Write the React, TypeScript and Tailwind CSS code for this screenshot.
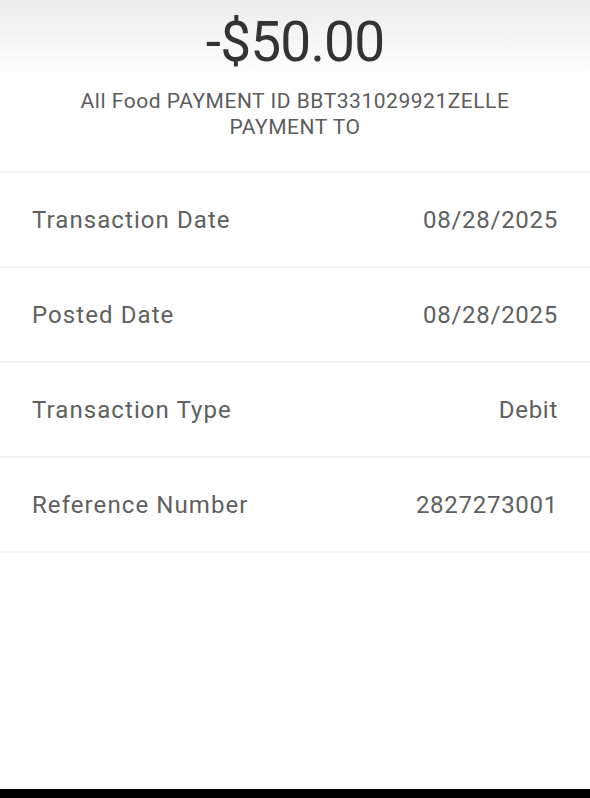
import React from 'react';

interface DetailRow {
    label: string;
    value: string;
}

const rows: DetailRow[] = [
    { label: 'Transaction Date', value: '08/28/2025' },
    { label: 'Posted Date', value: '08/28/2025' },
    { label: 'Transaction Type', value: 'Debit' },
    { label: 'Reference Number', value: '2827273001' },
];

const App: React.FC = () => {
    return (
        <div className="flex flex-col h-[798px] w-[590px] bg-white font-['Roboto',sans-serif] overflow-hidden">
            <div className="flex flex-col items-center h-[171px] bg-gradient-to-b from-[#ececec] via-white via-[45%] to-white">
                <h1 className="mt-[9px] text-[55px] leading-[66px] text-[#333333] tracking-[-0.015em]">-$50.00</h1>
                <p className="mt-[13px] max-w-[450px] text-center text-[21px] leading-[26px] tracking-[0.025em] text-[#5c5c5c]">
                    All Food PAYMENT ID BBT331029921ZELLE PAYMENT TO
                </p>
            </div>
            <div className="flex flex-col">
                {rows.map(row => (
                    <div key={row.label} className="flex items-center justify-between h-[95px] px-8 border-t-2 border-[#f2f2f2]">
                        <span className="text-[24px] tracking-[0.045em] text-[#606060]">{row.label}</span>
                        <span className="text-[24px] tracking-[0.03em] text-[#606060]">{row.value}</span>
                    </div>
                ))}
                <div className="border-t-2 border-[#f2f2f2]" />
            </div>
            <div className="flex-1 bg-white" />
            <div className="h-[9px] bg-black" />
        </div>
    );
};

export default App;
